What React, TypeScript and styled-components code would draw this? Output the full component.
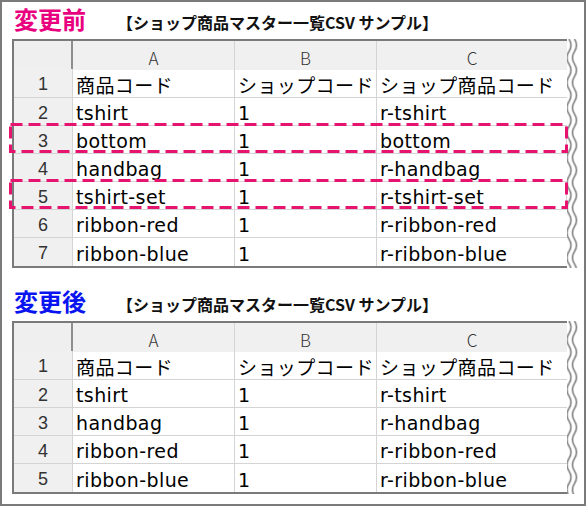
import React from 'react';
import styled, { createGlobalStyle } from 'styled-components';

const GlobalStyle = createGlobalStyle`
  html, body { margin: 0; padding: 0; background: #ffffff; }
  body { font-family: "Liberation Sans", "Noto Sans CJK JP", sans-serif; }
`;

const Frame = styled.div`
  box-sizing: border-box;
  width: 586px;
  height: 506px;
  border: 2px solid #7a7a7a;
  padding: 4px 0 0 10px;
  background: #ffffff;
`;

const Section = styled.section<{ $gap: number }>`
  margin-top: ${(p) => p.$gap}px;
`;

const TitleRow = styled.div`
  display: flex;
  align-items: baseline;
  height: 26px;
  padding-left: 2px;
`;

const Title = styled.h2<{ $color: string }>`
  margin: 0;
  font-family: "Noto Sans CJK JP", sans-serif;
  font-weight: 700;
  font-size: 24px;
  line-height: 26px;
  color: ${(p) => p.$color};
`;

const Subtitle = styled.span`
  margin-left: 31px;
  font-family: "Noto Sans CJK JP", sans-serif;
  font-weight: 700;
  font-size: 16px;
  line-height: 26px;
  color: #111111;
`;

const TableWrap = styled.div`
  display: flex;
  margin-top: 7px;
`;

const Table = styled.div`
  border-top: 2px solid #7a7a7a;
  border-bottom: 2px solid #7a7a7a;
  border-left: 2px solid #7a7a7a;
`;

const Row = styled.div<{ $h: number }>`
  position: relative;
  display: grid;
  grid-template-columns: 59px 162px 142px 190px;
  height: ${(p) => p.$h}px;
  box-sizing: border-box;
  border-bottom: 1px solid #d4d4d4;
  &:last-child { border-bottom: none; }
`;

const Corner = styled.div`
  background: #efefef;
  border-right: 2px solid #8e8e8e;
  border-bottom: 2px solid #8e8e8e;
  margin-bottom: -1px;
  box-sizing: border-box;
`;

const ColHead = styled.div`
  display: flex;
  align-items: center;
  justify-content: center;
  padding-top: 4px;
  background: #f0f0f0;
  border-right: 1px solid #d4d4d4;
  font-family: "Noto Sans CJK JP", sans-serif;
  font-weight: 300;
  font-size: 17px;
  color: #333333;
  &:last-child { border-right: none; }
`;

const RowNum = styled.div`
  display: flex;
  align-items: center;
  justify-content: center;
  padding-top: 3px;
  background: #f0f0f0;
  border-right: 1px solid #d4d4d4;
  font-family: "Liberation Sans", sans-serif;
  font-size: 18px;
  color: #333333;
`;

const Cell = styled.div`
  display: flex;
  align-items: center;
  padding: 3px 0 0 3px;
  border-right: 1px solid #d4d4d4;
  font-family: "DejaVu Sans", "Noto Sans CJK JP", sans-serif;
  font-size: 19px;
  letter-spacing: 0.4px;
  color: #000000;
  white-space: nowrap;
  overflow: hidden;
  &:last-child { border-right: none; }
`;

const Highlight = styled.svg`
  position: absolute;
  left: -5px;
  top: -3px;
  width: calc(100% + 6px);
  height: calc(100% + 3px);
  overflow: visible;
  pointer-events: none;
`;

const DashRect = styled.rect`
  x: 1.5px;
  y: 1.5px;
  width: calc(100% - 3px);
  height: calc(100% - 3px);
  fill: none;
  stroke: #e6146e;
  stroke-width: 3;
  stroke-dasharray: 12 6;
`;

const Wave = styled.svg`
  display: block;
  flex: none;
  width: 14px;
`;

function wavePath(x: number, h: number) {
  let d = `M${x} 0`;
  const step = 12.5;
  let i = 0;
  for (let y = 0; y < h; y += step, i++) {
    const c = i % 2 === 0 ? 4 : -4;
    d += ` q${c} ${step / 2} 0 ${step}`;
  }
  return d;
}

function TearEdge({ height }: { height: number }) {
  return (
    <Wave height={height} viewBox={`0 0 14 ${height}`}>
      <path d={wavePath(2, height)} fill="none" stroke="#cfcfcf" strokeWidth={2.6} />
      <path d={wavePath(2, height)} fill="none" stroke="#8a8a8a" strokeWidth={1.1} />
      <path d={wavePath(7.5, height)} fill="none" stroke="#cfcfcf" strokeWidth={2.6} />
      <path d={wavePath(7.5, height)} fill="none" stroke="#8a8a8a" strokeWidth={1.1} />
    </Wave>
  );
}

type Data = { cells: [string, string, string]; mark?: boolean }[];

function Sheet({ rows }: { rows: Data }) {
  const height = 2 + 28 + 29 + (rows.length - 1) * 28 + 2;
  return (
    <TableWrap>
      <Table>
        <Row $h={28}>
          <Corner />
          <ColHead>A</ColHead>
          <ColHead>B</ColHead>
          <ColHead>C</ColHead>
        </Row>
        {rows.map((r, i) => (
          <Row key={i} $h={i === 0 ? 29 : 28}>
            <RowNum>{i + 1}</RowNum>
            <Cell>{r.cells[0]}</Cell>
            <Cell>{r.cells[1]}</Cell>
            <Cell>{r.cells[2]}</Cell>
            {r.mark && (
              <Highlight>
                <DashRect />
              </Highlight>
            )}
          </Row>
        ))}
      </Table>
      <TearEdge height={height} />
    </TableWrap>
  );
}

const before: Data = [
  { cells: ['商品コード', 'ショップコード', 'ショップ商品コード'] },
  { cells: ['tshirt', '1', 'r-tshirt'] },
  { cells: ['bottom', '1', 'bottom'], mark: true },
  { cells: ['handbag', '1', 'r-handbag'] },
  { cells: ['tshirt-set', '1', 'r-tshirt-set'], mark: true },
  { cells: ['ribbon-red', '1', 'r-ribbon-red'] },
  { cells: ['ribbon-blue', '1', 'r-ribbon-blue'] },
];

const after: Data = [
  { cells: ['商品コード', 'ショップコード', 'ショップ商品コード'] },
  { cells: ['tshirt', '1', 'r-tshirt'] },
  { cells: ['handbag', '1', 'r-handbag'] },
  { cells: ['ribbon-red', '1', 'r-ribbon-red'] },
  { cells: ['ribbon-blue', '1', 'r-ribbon-blue'] },
];

export default function App() {
  return (
    <>
      <GlobalStyle />
      <Frame>
        <Section $gap={0}>
          <TitleRow>
            <Title $color="#e8007f">変更前</Title>
            <Subtitle>【ショップ商品マスター一覧CSV サンプル】</Subtitle>
          </TitleRow>
          <Sheet rows={before} />
        </Section>
        <Section $gap={20}>
          <TitleRow>
            <Title $color="#0a14f0">変更後</Title>
            <Subtitle>【ショップ商品マスター一覧CSV サンプル】</Subtitle>
          </TitleRow>
          <Sheet rows={after} />
        </Section>
      </Frame>
    </>
  );
}
